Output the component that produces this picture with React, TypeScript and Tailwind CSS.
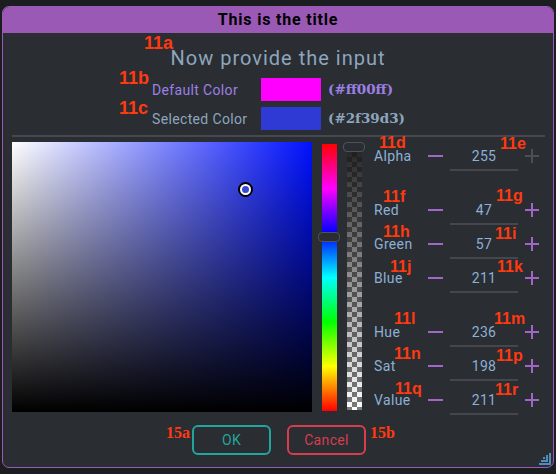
import React from "react";

type Row = { label: string; value: number; disabled?: boolean };

const groups: Row[][] = [
  [{ label: "Alpha", value: 255, disabled: true }],
  [
    { label: "Red", value: 47 },
    { label: "Green", value: 57 },
    { label: "Blue", value: 211 },
  ],
  [
    { label: "Hue", value: 236 },
    { label: "Sat", value: 198 },
    { label: "Value", value: 211 },
  ],
];

// glyph top-left of each marker
const marks = [
  { t: "11a", x: 144, y: 37, big: true },
  { t: "11b", x: 119, y: 72, big: true },
  { t: "11c", x: 119, y: 102, big: true },
  { t: "11d", x: 379, y: 137 },
  { t: "11e", x: 500, y: 138 },
  { t: "11f", x: 383, y: 191 },
  { t: "11g", x: 496, y: 190 },
  { t: "11h", x: 383, y: 226 },
  { t: "11i", x: 495, y: 228 },
  { t: "11j", x: 390, y: 261 },
  { t: "11k", x: 497, y: 261 },
  { t: "11l", x: 394, y: 313 },
  { t: "11m", x: 494, y: 313 },
  { t: "11n", x: 394, y: 348 },
  { t: "11p", x: 496, y: 350 },
  { t: "11q", x: 395, y: 383 },
  { t: "11r", x: 495, y: 384 },
];

const Plus = ({ disabled }: { disabled?: boolean }) => (
  <svg width="14" height="14" viewBox="0 0 14 14" className="shrink-0">
    <path
      d="M7 0v14M0 7h14"
      stroke={disabled ? "#4b5057" : "#a266c9"}
      strokeWidth="2"
    />
  </svg>
);

const SliderRow = ({ row }: { row: Row }) => (
  <div className="flex h-[34px] shrink-0 items-start">
    <div className="flex h-[34px] w-[54px] items-center text-[14px] leading-[10px] tracking-wide text-[#8cb0d6]">
      {row.label}
    </div>
    <div className="flex h-[34px] items-center">
      <div className="h-[2px] w-[15px] bg-[#a266c9]" />
    </div>
    <div className="ml-[7px] flex w-[68px] flex-col pt-[12px]">
      <div className="h-[10px] text-center text-[14px] leading-[10px] tracking-wide text-[#8cb0d6]">
        {row.value}
      </div>
      <div className="mt-[8px] h-[2px] bg-[#44484e]" />
    </div>
    <div className="ml-[7px] flex h-[34px] items-center">
      <Plus disabled={row.disabled} />
    </div>
  </div>
);

export default function App() {
  return (
    <div className="relative min-h-[474px] bg-[#1c1d20] px-[2px] pt-[6px] font-['Roboto','Liberation_Sans',sans-serif]">
      <div className="relative flex h-[462px] w-[552px] flex-col overflow-hidden rounded-[7px] border border-[#9b59b6] bg-[#2a2d32] *:shrink-0">
        <div className="flex h-[26px] items-center justify-center bg-[#9b59b6] text-[16px] font-bold tracking-wider text-black">
          This is the title
        </div>

        <div className="mt-[13px] h-[24px] text-center text-[20px] leading-[24px] tracking-wider text-[#8ea6bd]">
          Now provide the input
        </div>

        <div className="mt-[8px] flex flex-col gap-[6px] pl-[149px]">
          <div className="flex h-[23px] items-center">
            <div className="w-[109px] text-[14px] leading-[12px] tracking-wide text-[#9c80e4]">
              Default Color
            </div>
            <div className="h-[23px] w-[60px] bg-[#ff00ff]" />
            <div className="ml-[7px] font-['DejaVu_Serif',serif] text-[13.5px] font-semibold text-[#9c80e4]">
              (#ff00ff)
            </div>
          </div>
          <div className="flex h-[23px] items-center">
            <div className="w-[109px] text-[14px] leading-[12px] tracking-wide text-[#8ea6bd]">
              Selected Color
            </div>
            <div className="h-[23px] w-[60px] bg-[#2f39d3]" />
            <div className="ml-[7px] font-['DejaVu_Serif',serif] text-[13.5px] font-semibold text-[#8ea6bd]">
              (#2f39d3)
            </div>
          </div>
        </div>

        <div className="ml-[9px] mt-[5px] h-[2px] w-[533px] bg-[#45484e]" />

        <div className="mt-[5px] flex items-start">
          <div className="relative ml-[9px] h-[270px] w-[300px] bg-[#0011ff]">
            <div className="h-full w-full bg-[linear-gradient(to_right,#ffffff,rgba(255,255,255,0))]">
              <div className="h-full w-full bg-[linear-gradient(to_bottom,rgba(0,0,0,0),#000000)]" />
            </div>
            <div className="absolute left-[226px] top-[40px] h-[15px] w-[15px] rounded-full border-2 border-black bg-white p-[2px]">
              <div className="h-full w-full rounded-full bg-[#3a48d8]" />
            </div>
          </div>

          <div className="relative ml-[10px] mt-[2px] h-[267px] w-[15px] bg-[linear-gradient(to_bottom,#ff0000,#ff00ff,#0000ff,#00ffff,#00ff00,#ffff00,#ff0000)]">
            <div className="absolute left-[-4px] top-[88px] h-[10px] w-[22px] rounded-[4px] border border-[#4e535a] bg-[#2a2d32]" />
          </div>

          <div className="relative ml-[10px] h-[268px] w-[15px]">
            <div className="absolute left-[-4px] top-0 h-[10px] w-[22px] rounded-[4px] border border-[#4e535a] bg-[#2a2d32]" />
            <div className="mt-[10px] h-[258px] w-[15px] bg-[repeating-conic-gradient(#7a7a7a_0_25%,#ffffff_0_50%)] bg-size-[10px_10px]">
              <div className="h-full w-full bg-[linear-gradient(to_bottom,rgba(24,24,24,0.93),rgba(24,24,24,0))]" />
            </div>
          </div>

          <div className="ml-[12px] mt-[-3px] flex flex-col gap-[20px]">
            {groups.map((g, i) => (
              <div key={i} className="flex flex-col">
                {g.map((r) => (
                  <SliderRow key={r.label} row={r} />
                ))}
              </div>
            ))}
          </div>
        </div>

        <div className="mt-[8px] flex justify-center gap-[16px] pl-[2px]">
          <button className="h-[30px] w-[79px] rounded-[6px] border-2 border-[#22a69b] text-[14px] tracking-wide text-[#22a69b]">
            OK
          </button>
          <button className="h-[30px] w-[79px] rounded-[6px] border-2 border-[#d63e4e] text-[14px] tracking-wide text-[#d63e4e]">
            Cancel
          </button>
        </div>

        <svg
          width="12"
          height="12"
          viewBox="0 0 12 12"
          className="absolute bottom-[2px] right-[2px]"
        >
          <path
            d="M11 0V11H0M8 2V8H2M5 4V5H4"
            fill="none"
            stroke="#4f8dbd"
            strokeWidth="2"
          />
        </svg>
      </div>

      {marks.map((m) => (
        <span
          key={m.t}
          className={`absolute font-['Liberation_Sans',sans-serif] font-bold text-[#ff3a10] ${
            m.big ? "text-[18px] leading-[13px]" : "text-[16px] leading-[12px]"
          }`}
          style={{ left: m.x, top: m.y }}
        >
          {m.t}
        </span>
      ))}
      <span className="absolute left-[166px] top-[427px] font-['Liberation_Serif',serif] text-[16px] font-bold leading-[12px] text-[#ff3a10]">
        15a
      </span>
      <span className="absolute left-[370px] top-[427px] font-['Liberation_Serif',serif] text-[16px] font-bold leading-[12px] text-[#ff3a10]">
        15b
      </span>
    </div>
  );
}
